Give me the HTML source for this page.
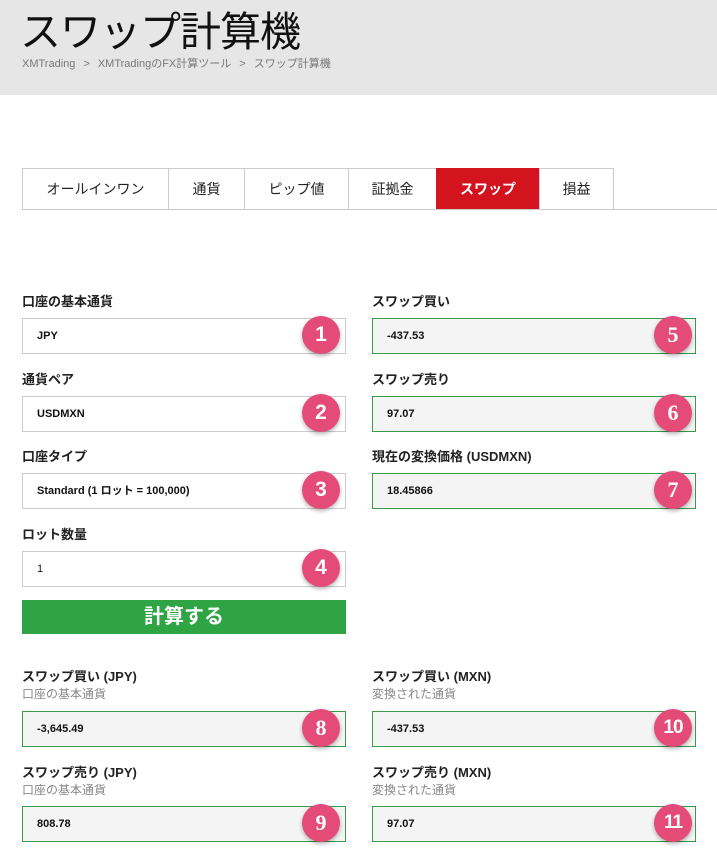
<!DOCTYPE html>
<html><head><meta charset="utf-8"><style>
*{box-sizing:border-box;margin:0;padding:0}
body{width:717px;height:852px;overflow:hidden;background:#fff;font-family:"Liberation Sans","Noto Sans CJK JP",sans-serif;color:#222;position:relative}
.hdr{position:absolute;left:0;top:0;width:717px;height:95px;background:#e6e6e6}
.title{position:absolute;left:20px;top:8px;font-size:41px;line-height:48px;color:#111;font-weight:400;letter-spacing:-1px}
.bc{position:absolute;left:22px;top:55px;font-size:11px;color:#777;white-space:nowrap}
.bc span{margin:0 8px}
.tabs{position:absolute;left:22px;top:168px;height:42px;width:695px;border-bottom:1px solid #ccc}
.tab{position:absolute;top:0;height:41px;border:1px solid #ccc;border-right:none;border-bottom:none;font-size:14px;line-height:40px;text-align:center;color:#222}
.tab.act{background:#d3141f;color:#fff;font-weight:700;border-color:#d3141f}
.lbl{position:absolute;font-size:13px;font-weight:700;color:#222}
.sub{position:absolute;font-size:12px;color:#888}
.f{position:absolute;width:324px;height:36px;border:1px solid #ccc;background:#fff;font-size:11px;font-weight:700;line-height:34px;padding-left:14px;color:#111}
.f.g{border-color:#3a9a4a;background:#f4f4f4}
.b{position:absolute;width:38px;height:38px;border-radius:50%;background:#e44b79;color:#fff;font-family:"Liberation Serif",serif;font-weight:700;font-size:22px;line-height:38px;text-align:center;box-shadow:0 2px 4px rgba(0,0,0,.3)}
.b.s{font-family:"Liberation Sans",sans-serif;font-size:21px;font-weight:700}
.btn{position:absolute;left:22px;top:600px;width:324px;height:34px;background:#2ea444;color:#fff;font-weight:700;font-size:20px;text-align:center;line-height:34px}
</style></head><body>
<div class="hdr"></div>
<div class="title">スワップ計算機</div>
<div class="bc">XMTrading<span>&gt;</span>XMTradingのFX計算ツール<span>&gt;</span>スワップ計算機</div>
<div class="tabs">
<div class="tab" style="left:0;width:146px">オールインワン</div>
<div class="tab" style="left:146px;width:76px">通貨</div>
<div class="tab" style="left:222px;width:104px">ピップ値</div>
<div class="tab" style="left:326px;width:88px">証拠金</div>
<div class="tab act" style="left:414px;width:103px">スワップ</div>
<div class="tab" style="left:517px;width:75px;border-right:1px solid #ccc">損益</div>
</div>

<div class="lbl" style="left:22px;top:291px">口座の基本通貨</div>
<div class="f" style="left:22px;top:318px">JPY</div>
<div class="lbl" style="left:22px;top:369px">通貨ペア</div>
<div class="f" style="left:22px;top:396px">USDMXN</div>
<div class="lbl" style="left:22px;top:446px">口座タイプ</div>
<div class="f" style="left:22px;top:473px">Standard (1 ロット = 100,000)</div>
<div class="lbl" style="left:22px;top:524px">ロット数量</div>
<div class="f" style="left:22px;top:551px;font-weight:400">1</div>
<div class="btn">計算する</div>

<div class="lbl" style="left:372px;top:291px">スワップ買い</div>
<div class="f g" style="left:372px;top:318px">-437.53</div>
<div class="lbl" style="left:372px;top:369px">スワップ売り</div>
<div class="f g" style="left:372px;top:396px">97.07</div>
<div class="lbl" style="left:372px;top:446px">現在の変換価格 (USDMXN)</div>
<div class="f g" style="left:372px;top:473px">18.45866</div>

<div class="lbl" style="left:22px;top:666px">スワップ買い (JPY)</div>
<div class="sub" style="left:22px;top:685px">口座の基本通貨</div>
<div class="f g" style="left:22px;top:711px">-3,645.49</div>
<div class="lbl" style="left:22px;top:762px">スワップ売り (JPY)</div>
<div class="sub" style="left:22px;top:781px">口座の基本通貨</div>
<div class="f g" style="left:22px;top:806px">808.78</div>

<div class="lbl" style="left:372px;top:666px">スワップ買い (MXN)</div>
<div class="sub" style="left:372px;top:685px">変換された通貨</div>
<div class="f g" style="left:372px;top:711px">-437.53</div>
<div class="lbl" style="left:372px;top:762px">スワップ売り (MXN)</div>
<div class="sub" style="left:372px;top:781px">変換された通貨</div>
<div class="f g" style="left:372px;top:806px">97.07</div>

<div class="b s" style="left:302px;top:316px">1</div>
<div class="b s" style="left:302px;top:394px">2</div>
<div class="b s" style="left:302px;top:471px">3</div>
<div class="b s" style="left:302px;top:549px">4</div>
<div class="b" style="left:654px;top:316px">5</div>
<div class="b" style="left:654px;top:394px">6</div>
<div class="b" style="left:654px;top:471px">7</div>
<div class="b" style="left:302px;top:709px">8</div>
<div class="b" style="left:302px;top:804px">9</div>
<div class="b s" style="left:654px;top:709px;font-size:19px;letter-spacing:-1px">10</div>
<div class="b s" style="left:654px;top:804px;font-size:19px;letter-spacing:-1px">11</div>
</body></html>
